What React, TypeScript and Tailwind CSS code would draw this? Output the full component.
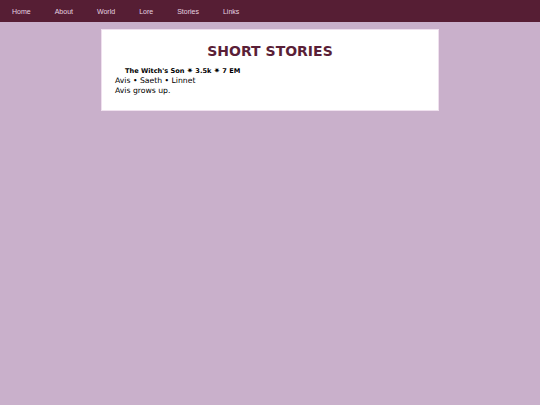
import React from "react";

const links = ["Home", "About", "World", "Lore", "Stories", "Links"];

export default function App() {
  return (
    <div className="min-h-[405px] bg-[#c9b0cb] font-['DejaVu_Sans',sans-serif]">
      <nav className="flex h-[22px] items-center bg-[#561e34] pl-0">
        {links.map((l) => (
          <a
            key={l}
            className="px-3 font-['Liberation_Sans',Arial,sans-serif] text-[7px] leading-none text-[#e6d3e0]"
          >
            {l}
          </a>
        ))}
      </nav>
      <main className="mx-auto mt-[7px] w-[338px] border border-[#efe0ee] bg-white px-[13px] pt-[12px] pb-[14px]">
        <h1 className="text-center text-[14px] font-bold leading-[18px] text-[#5a1f37]">
          SHORT STORIES
        </h1>
        <div className="mt-[6px] text-[7.7px] leading-[10px] text-black">
          <div className="pl-[10px] text-[6.6px] font-bold">
            The Witch's Son <span className="text-[7.5px]">✷</span> 3.5k{" "}
            <span className="text-[7.5px]">✷</span> 7 EM
          </div>
          <div>Avis • Saeth • Linnet</div>
          <div>Avis grows up.</div>
        </div>
      </main>
    </div>
  );
}
